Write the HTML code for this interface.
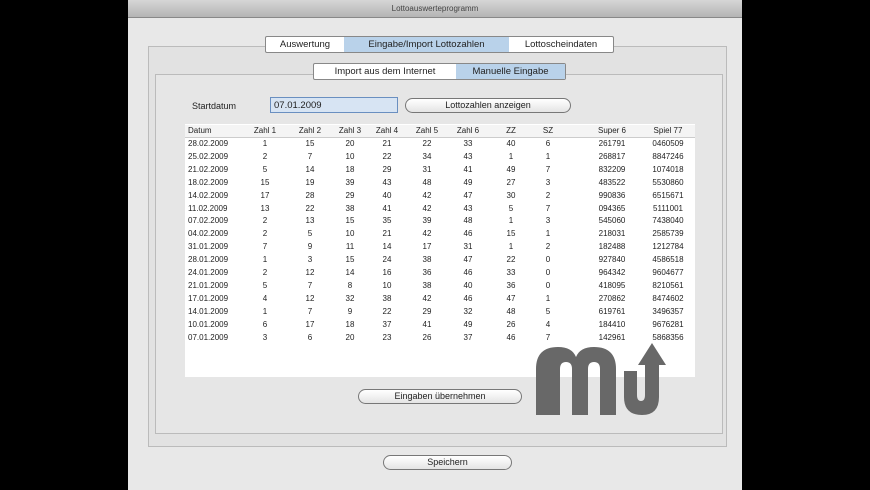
<!DOCTYPE html><html><head><meta charset="utf-8"><style>
body{margin:0;width:870px;height:490px;background:#000;position:relative;overflow:hidden;font-family:"Liberation Sans",sans-serif;font-size:8px;color:#222}
.win{position:absolute;left:128px;top:0;width:614px;height:490px;background:#e8e8e8}
.tb{position:absolute;left:0;top:0;width:614px;height:17px;background:linear-gradient(#d6d6d6,#b4b4b4);border-bottom:1px solid #888;text-align:center;line-height:18px;font-size:8px;color:#444}
.box{position:absolute;border:1px solid #bbb;background:#e2e2e2}
.seg{position:absolute;display:flex;border:1px solid #888;background:#fff;height:15px;line-height:15px;font-size:9.5px;border-radius:2px}
.seg span{text-align:center;display:block}.seg .on{background:#b9d2ea}
.btn{position:absolute;border:1px solid #777;border-radius:8px;background:linear-gradient(#fff,#e4e4e4);height:13px;line-height:13px;text-align:center;font-size:9px}
.tbl{position:absolute;left:185px;top:124px;width:510px;height:253px;background:#fff}
.r{position:absolute;left:0;height:12px;width:510px}
.r span{position:absolute;text-align:center;width:40px;line-height:12px}
</style></head><body>
<div class="win"><div class="tb">Lottoauswerteprogramm</div>
<div class="box" style="left:20px;top:46px;width:577px;height:399px"></div>
<div class="box" style="left:27px;top:74px;width:566px;height:358px;background:#e6e6e6"></div>
</div>
<div class="seg" style="left:265px;top:36px"><span style="width:78px">Auswertung</span><span class="on" style="width:165px">Eingabe/Import Lottozahlen</span><span style="width:104px">Lottoscheindaten</span></div>
<div class="seg" style="left:313px;top:63px"><span style="width:142px">Import aus dem Internet</span><span class="on" style="width:109px">Manuelle Eingabe</span></div>
<div style="position:absolute;left:192px;top:101px;font-size:9px">Startdatum</div>
<div style="position:absolute;left:270px;top:97px;width:128px;height:16px;border:1px solid #6a8fc0;background:#d7e4f3;line-height:16px;font-size:9.5px;padding-left:3px;box-sizing:border-box">07.01.2009</div>
<div class="btn" style="left:405px;top:98px;width:164px">Lottozahlen anzeigen</div>
<div class="tbl" id="t"></div>
<div class="btn" style="left:358px;top:389px;width:162px">Eingaben übernehmen</div>
<div class="btn" style="left:383px;top:455px;width:127px">Speichern</div>
<svg style="position:absolute;left:532px;top:335px" width="140" height="85" viewBox="0 0 140 85"><path d="M4 80V34Q4 12 26 12Q40 12 44 22Q48 12 62 12Q84 12 84 34V80H68V34Q68 27 62 27Q56 27 56 34V80H40V34Q40 27 34 27Q28 27 28 34V80Z" fill="#686868"/><path d="M92 36V62Q92 80 110 80Q127 80 127 62V30H134L120 8L106 30H113V60Q113 66 109 66Q105 66 105 60V36Z" fill="#686868"/></svg>
<script>
var d=`Datum,Zahl 1,Zahl 2,Zahl 3,Zahl 4,Zahl 5,Zahl 6,ZZ,SZ,Super 6,Spiel 77
28.02.2009,1,15,20,21,22,33,40,6,261791,0460509
25.02.2009,2,7,10,22,34,43,1,1,268817,8847246
21.02.2009,5,14,18,29,31,41,49,7,832209,1074018
18.02.2009,15,19,39,43,48,49,27,3,483522,5530860
14.02.2009,17,28,29,40,42,47,30,2,990836,6515671
11.02.2009,13,22,38,41,42,43,5,7,094365,5111001
07.02.2009,2,13,15,35,39,48,1,3,545060,7438040
04.02.2009,2,5,10,21,42,46,15,1,218031,2585739
31.01.2009,7,9,11,14,17,31,1,2,182488,1212784
28.01.2009,1,3,15,24,38,47,22,0,927840,4586518
24.01.2009,2,12,14,16,36,46,33,0,964342,9604677
21.01.2009,5,7,8,10,38,40,36,0,418095,8210561
17.01.2009,4,12,32,38,42,46,47,1,270862,8474602
14.01.2009,1,7,9,22,29,32,48,5,619761,3496357
10.01.2009,6,17,18,37,41,49,26,4,184410,9676281
07.01.2009,3,6,20,23,26,37,46,7,142961,5868356`.split('\n');
var cx=[22,80,125,165,202,242,283,326,363,427,483],h='';
d.forEach(function(l,i){var c=l.split(',');h+='<div class="r" style="top:'+(i==0?1:14+(i-1)*12.9)+'px'+(i==0?';border-bottom:1px solid #ccc;background:#f4f4f4':'')+'">';c.forEach(function(v,j){h+='<span style="left:'+(j==0?3:cx[j]-20)+'px;'+(j==0?'text-align:left;width:60px':'')+'">'+v+'</span>'});h+='</div>'});
document.getElementById('t').innerHTML=h;
</script>
</body></html>
